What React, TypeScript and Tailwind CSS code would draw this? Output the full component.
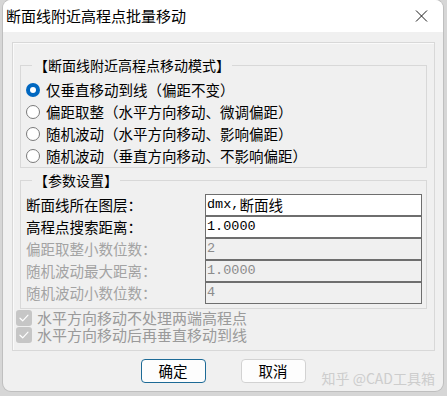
import React from "react";

const modes = [
  "仅垂直移动到线（偏距不变）",
  "偏距取整（水平方向移动、微调偏距）",
  "随机波动（水平方向移动、影响偏距）",
  "随机波动（垂直方向移动、不影响偏距）",
];

type Param = { label: string; value: string; cjk?: string; enabled: boolean };

const params: Param[] = [
  { label: "断面线所在图层：", value: "dmx,", cjk: "断面线", enabled: true },
  { label: "高程点搜索距离：", value: "1.0000", enabled: true },
  { label: "偏距取整小数位数：", value: "2", enabled: false },
  { label: "随机波动最大距离：", value: "1.0000", enabled: false },
  { label: "随机波动小数位数：", value: "4", enabled: false },
];

const options = ["水平方向移动不处理两端高程点", "水平方向移动后再垂直移动到线"];

function Radio({ checked }: { checked: boolean }) {
  if (checked) {
    return (
      <span className="flex h-[14px] w-[14px] shrink-0 items-center justify-center rounded-full bg-[#0067c0]">
        <span className="h-[6px] w-[6px] rounded-full bg-white" />
      </span>
    );
  }
  return <span className="h-[14px] w-[14px] shrink-0 rounded-full border border-[#7a7a7a] bg-white" />;
}

function CheckMark() {
  return (
    <span className="flex h-[16px] w-[16px] shrink-0 items-center justify-center rounded-[3px] bg-[#c6c6c6]">
      <svg width="10" height="8" viewBox="0 0 10 8" fill="none">
        <path d="M1 4.2 3.7 6.8 9 1.2" stroke="#fff" strokeWidth="1.2" strokeLinecap="round" strokeLinejoin="round" />
      </svg>
    </span>
  );
}

export default function App() {
  return (
    <div className="h-[396px] w-[447px] overflow-hidden bg-[#d6d6d6] pl-[3px] font-['Noto_Sans_CJK_SC',sans-serif]">
      <div className="relative h-[391px] w-[440px] overflow-hidden rounded-lg bg-[#f0f0f0] shadow-[0_0_0_1px_#bfbfbf]">
        {/* Title bar */}
        <div className="flex h-[32px] items-center justify-between bg-white pl-[3px] pr-[15px]">
          <span className="text-[15px] leading-[20px] text-black">断面线附近高程点批量移动</span>
          <svg width="13" height="12" viewBox="0 0 13 12" fill="none">
            <path d="M1 0.5 12 11.5M12 0.5 1 11.5" stroke="#1b1b1b" strokeWidth="1" />
          </svg>
        </div>

        {/* Outer frame */}
        <div className="ml-[9px] mr-[8px] mt-[10px] border border-[#d8d8d8] px-[7px] pb-[7px] pt-[12px] shadow-[inset_1px_1px_0_#fafafa]">
          <fieldset className="border border-[#d8d8d8]">
            <legend className="ml-[11px] px-[2px] text-[14px] leading-[20px] text-black">
              【断面线附近高程点移动模式】
            </legend>
            <div className="pt-[4px]">
              {modes.map((m, i) => (
                <label key={m} className="flex h-[22px] items-center gap-[6px] pl-[5px] text-[14.5px] text-black">
                  <Radio checked={i === 0} />
                  <span className="whitespace-nowrap leading-[20px]">{m}</span>
                </label>
              ))}
            </div>
          </fieldset>

          <fieldset className="mt-[2px] border border-[#d8d8d8]">
            <legend className="ml-[11px] px-[2px] text-[14px] leading-[20px] text-black">【参数设置】</legend>
            <div className="pb-[4px] pl-[5px] pr-[4px] pt-[4px]">
              {params.map((p) => (
                <div key={p.label} className="flex h-[22px] items-center">
                  <span
                    className={`w-[179px] whitespace-nowrap text-[14.5px] leading-[20px] ${
                      p.enabled ? "text-black" : "text-[#a3a3a3]"
                    }`}
                  >
                    {p.label}
                  </span>
                  <div
                    className={`flex h-full flex-1 items-center border border-[#6e6e6e] pl-[1px] font-['Liberation_Mono','Noto_Sans_CJK_SC',monospace] text-[13.5px] ${
                      p.enabled ? "bg-white text-black" : "bg-[#f0f0f0] text-[#8c8c8c]"
                    }`}
                  >
                    {p.value}
                    {p.cjk && (
                      <span className="font-['Noto_Sans_CJK_SC',sans-serif] text-[14.5px]">{p.cjk}</span>
                    )}
                  </div>
                </div>
              ))}
            </div>
          </fieldset>

          <div className="-ml-[4px]">
            {options.map((o) => (
              <div key={o} className="flex h-[17px] items-center gap-[5px]">
                <CheckMark />
                <span className="text-[15px] leading-[17px] text-[#9a9a9a]">{o}</span>
              </div>
            ))}
          </div>
        </div>

        {/* Buttons */}
        <div className="mt-[8px] flex justify-center gap-[35px]">
          <button className="h-[24px] w-[65px] rounded-[4px] border border-[#1d6a96] bg-[#fdfdfd] text-[14.5px] leading-[20px] text-black">
            确定
          </button>
          <button className="h-[24px] w-[65px] rounded-[4px] border border-[#d2d2d2] bg-[#fdfdfd] text-[14.5px] leading-[20px] text-black">
            取消
          </button>
        </div>

        <span className="absolute bottom-[4px] right-[8px] text-[14px] leading-[18px] text-[#cdcdcd]">
          知乎 @CAD工具箱
        </span>
      </div>
    </div>
  );
}
